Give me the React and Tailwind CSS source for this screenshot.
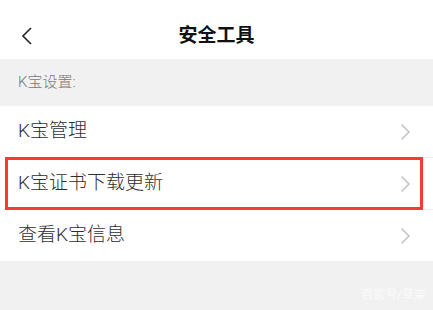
const FONT = "font-['Roboto','Noto_Sans_CJK_SC',sans-serif]";

function Chevron() {
  return (
    <svg width="11" height="18" viewBox="0 0 11 18" fill="none" className="shrink-0">
      <path d="M1.5 1.5 L9 9 L1.5 16.5" stroke="#c4c4c4" strokeWidth="1.6" />
    </svg>
  );
}

function Row({ label, boxed, last }) {
  return (
    <div className="relative bg-white">
      <div className="flex items-center justify-between h-[51px] pl-[18px] pr-[22px]">
        <span className="text-[19px] font-light text-[#2e2e2e]">{label}</span>
        <Chevron />
      </div>
      {!last && <div className="ml-[18px] h-px bg-[#ececec]" />}
      {boxed && (
        <div className="absolute left-[5px] right-[10px] top-[-1px] bottom-0 border-[3px] border-[#f53a3a]" />
      )}
    </div>
  );
}

export default function App() {
  return (
    <div className={`w-[433px] h-[310px] bg-[#f1f1f1] flex flex-col ${FONT}`}>
      <div className="relative h-[59px] bg-white flex items-center justify-center">
        <svg width="12" height="18" viewBox="0 0 12 18" fill="none" className="absolute left-[21px] top-[27px]">
          <path d="M10 1 L2 9 L10 17" stroke="#222" strokeWidth="1.6" />
        </svg>
        <span className="text-[19px] font-bold text-[#111] mt-[13px]">安全工具</span>
      </div>
      <div className="h-[47px] flex items-center pl-[18px] text-[15px] font-light text-[#777]">K宝设置:</div>
      <Row label="K宝管理" />
      <Row label="K宝证书下载更新" boxed />
      <Row label="查看K宝信息" last />
      <div className="flex-1 flex items-end justify-end pr-[7px] pb-[6px]">
        <span className="text-[12px] font-light text-white">百家号/草柴</span>
      </div>
    </div>
  );
}
